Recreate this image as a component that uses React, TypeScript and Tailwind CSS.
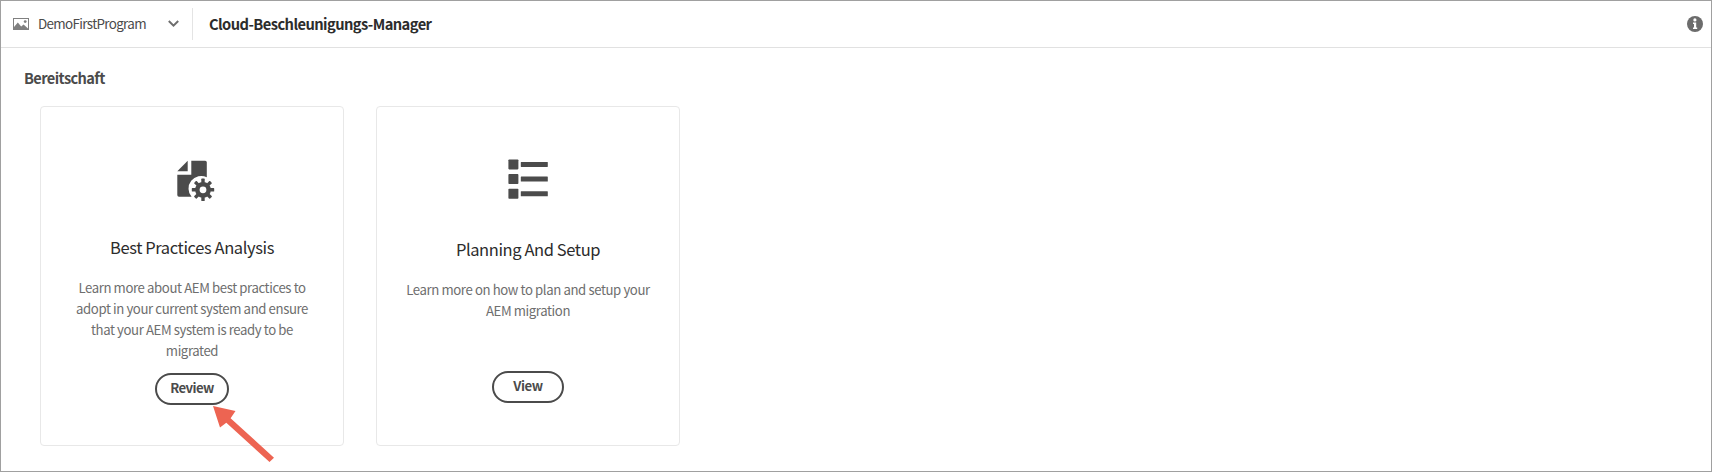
import type { ReactNode } from "react";

function ImageIcon() {
  return (
    <svg width="16" height="12" viewBox="0 0 16 12" className="block">
      <rect x="0.5" y="0.5" width="15" height="11" fill="none" stroke="#808080" />
      <path d="M1 9 L4.8 4.6 L8.2 8.6 L10.6 6.6 L15 10.4 V11.5 H1 Z" fill="#808080" />
      <circle cx="12.2" cy="3.6" r="1.4" fill="#808080" />
    </svg>
  );
}

function InfoIcon() {
  return (
    <svg width="16" height="16" viewBox="0 0 16 16" className="block">
      <circle cx="8" cy="8" r="8" fill="#6c6c6c" />
      <circle cx="7.9" cy="3.9" r="1.6" fill="#fff" />
      <path d="M6 6.5 H9.2 V11.4 H10.2 V13 H6 V11.4 H7 V8 H6 Z" fill="#fff" />
    </svg>
  );
}

const teeth = [0, 45, 90, 135, 180, 225, 270, 315];

function DocumentGearIcon() {
  return (
    <svg width="38" height="42" viewBox="0 0 38 42" className="block">
      <path d="M0.3 11.3 L10.7 0.8 V11.3 Z" fill="#4b4b4b" />
      <path
        d="M14.3 0.7 H28.2 Q29.8 0.7 29.8 2.3 V17.3 A12.6 12.6 0 0 0 14.6 36.8 H2 Q0.3 36.8 0.3 35.1 V14.7 H14.3 Z"
        fill="#4b4b4b"
      />
      <g transform="translate(26 29.8)" fill="#4b4b4b">
        <path fillRule="evenodd" d="M0 -7.9 A7.9 7.9 0 1 1 0 7.9 A7.9 7.9 0 1 1 0 -7.9 Z M0 -3.4 A3.4 3.4 0 1 0 0 3.4 A3.4 3.4 0 1 0 0 -3.4 Z" />
        {teeth.map((angle) => (
          <rect key={angle} x="-1.7" y="-11.2" width="3.4" height="4.5" rx="0.6" transform={`rotate(${angle})`} />
        ))}
      </g>
    </svg>
  );
}

function ListIcon() {
  return (
    <svg width="40" height="40" viewBox="0 0 40 40" className="block">
      {[0, 14.7, 29.4].map((y) => (
        <g key={y} fill="#4b4b4b">
          <rect x="0.4" y={y + 0.4} width="10" height="10" rx="0.8" />
          <rect x="12.8" y={y + 2.9} width="27" height="5" rx="0.4" />
        </g>
      ))}
    </svg>
  );
}

function Card({ children }: { children: ReactNode }) {
  return (
    <section className="flex h-[340px] w-[304px] flex-col items-center rounded border border-[#e8e8e8] text-center">
      {children}
    </section>
  );
}

export default function App() {
  return (
    <div className="relative flex h-[472px] w-[1712px] flex-col border border-[#a0a0a0] bg-white font-['Noto_Sans_CJK_SC','Noto_Sans',sans-serif] text-[#4b4b4b]">
      <header className="flex h-[47px] shrink-0 items-center border-b border-[#e1e1e1] pr-2 pl-3">
        <ImageIcon />
        <span className="mb-[3px] ml-[9px] w-[130px] text-[13.4px] leading-5 tracking-[-0.65px] whitespace-nowrap">
          DemoFirstProgram
        </span>
        <svg width="11" height="7" viewBox="0 0 11 7" className="-mt-0.5 block">
          <path d="M0.8 1 L5.5 5.6 L10.2 1" fill="none" stroke="#6e6e6e" strokeWidth="2" />
        </svg>
        <span className="ml-[13px] h-8 w-px bg-[#e4e4e4]" />
        <h1 className="ml-[16px] text-[14.7px] leading-5 font-bold tracking-[-0.57px] whitespace-nowrap text-[#2c2c2c]">
          Cloud-Beschleunigungs-Manager
        </h1>
        <span className="ml-auto">
          <InfoIcon />
        </span>
      </header>
      <main className="px-[23px] pt-5">
        <h2 className="text-[14.6px] leading-5 font-bold tracking-[-0.6px]">Bereitschaft</h2>
        <div className="mt-[18px] ml-4 flex gap-8">
          <Card>
            <div className="mt-[53px] ml-2 h-[42px]">
              <DocumentGearIcon />
            </div>
            <h3 className="mt-[33px] text-[16.5px] leading-6 tracking-[-0.4px] whitespace-nowrap text-[#2c2c2c]">
              Best Practices Analysis
            </h3>
            <p className="mt-[18px] text-[13.2px] leading-[21px] tracking-[-0.4px] whitespace-nowrap text-[#6e6e6e]">
              Learn more about AEM best practices to
              <br />
              adopt in your current system and ensure
              <br />
              that your AEM system is ready to be
              <br />
              migrated
            </p>
            <button className="mt-[12px] flex h-8 w-[74px] items-center justify-center rounded-full border-2 border-[#4b4b4b] pb-0.5 text-[13.2px] leading-5 font-bold tracking-[-0.6px]">
              Review
            </button>
          </Card>
          <Card>
            <div className="mt-[52px] h-[42px]">
              <ListIcon />
            </div>
            <h3 className="mt-[36px] text-[16.5px] leading-6 tracking-[-0.4px] whitespace-nowrap text-[#2c2c2c]">
              Planning And Setup
            </h3>
            <p className="mt-[18px] h-[84px] text-[13.2px] leading-[21px] tracking-[-0.4px] whitespace-nowrap text-[#6e6e6e]">
              Learn more on how to plan and setup your
              <br />
              AEM migration
            </p>
            <button className="mt-[8px] flex h-8 w-[72px] items-center justify-center rounded-full border-2 border-[#4b4b4b] pb-0.5 text-[13.2px] leading-5 font-bold tracking-[-0.4px]">
              View
            </button>
          </Card>
        </div>
      </main>
      <svg width="64" height="58" viewBox="0 0 64 58" className="absolute top-[404px] left-[211px]">
        <path d="M1 1 L23.5 6 L18.6 13.2 L62 52.7 L57.5 57 L14.3 17.8 L8 22.6 Z" fill="#ed6452" />
      </svg>
    </div>
  );
}
